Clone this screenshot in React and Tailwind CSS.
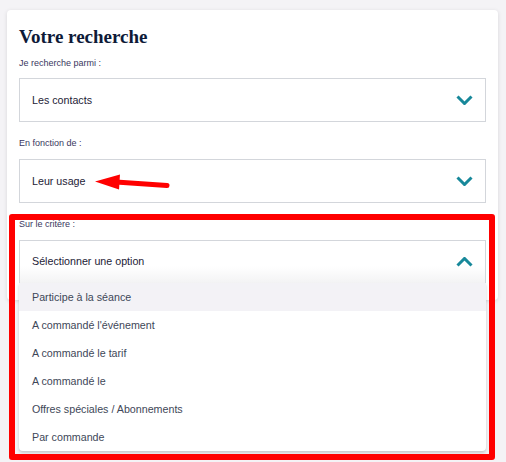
import React from "react";

const sans = { fontFamily: '"Liberation Sans", Arial, sans-serif' };

function Chevron({ up }) {
  return (
    <svg width="17" height="10" viewBox="0 0 17 10" className="shrink-0">
      <path
        d={up ? "M1.5 8.5 L8.5 1.5 L15.5 8.5" : "M1.5 1.5 L8.5 8.5 L15.5 1.5"}
        fill="none"
        stroke="#17889a"
        strokeWidth="3"
      />
    </svg>
  );
}

function Label({ children, className = "" }) {
  return (
    <div className={`text-[9px] leading-[12px] text-[#3a3760] ${className}`} style={sans}>
      {children}
    </div>
  );
}

function Select({ value, up }) {
  return (
    <div className="h-[44px] border border-[#d3d6db] bg-white flex items-center justify-between pl-[12px] pr-[12px]">
      <span className="text-[10.7px] text-[#1d2236]" style={sans}>
        {value}
      </span>
      <Chevron up={up} />
    </div>
  );
}

const options = [
  "Participe à la séance",
  "A commandé l'événement",
  "A commandé le tarif",
  "A commandé le",
  "Offres spéciales / Abonnements",
  "Par commande",
];

export default function App() {
  return (
    <div className="relative w-[506px] h-[462px] overflow-hidden bg-[#f4f3f6] pt-[10px] pl-[7px]">
      <div className="w-[491px] bg-white rounded-[4px] shadow-[0_1px_4px_rgba(0,0,0,0.12)] px-3 pt-[15px] pb-[16px]">
        <h1
          className="text-[19px] leading-[24px] font-bold text-[#0e1a38]"
          style={{ fontFamily: '"Liberation Serif", "Times New Roman", serif' }}
        >
          Votre recherche
        </h1>
        <Label className="mt-[8px] mb-[9px]">Je recherche parmi :</Label>
        <Select value="Les contacts" />
        <Label className="mt-[15px] mb-[10px]">En fonction de :</Label>
        <Select value="Leur usage" />
        <Label className="mt-[15px] mb-[10px]">Sur le critère :</Label>
        <div className="relative">
          <div className="h-[44px] border border-[#d3d6db] bg-gradient-to-b from-white from-60% to-[#f3f3f4] flex items-center justify-between pl-[12px] pr-[12px]">
            <span className="text-[10.7px] text-[#1d2236] -mt-[2px]" style={sans}>
              Sélectionner une option
            </span>
            <Chevron up />
          </div>
          <ul className="absolute left-0 right-0 top-[43px] z-10 bg-white rounded-b-[4px] shadow-[0_2px_3px_rgba(0,0,0,0.18)]">
            {options.map((o, i) => (
              <li
                key={o}
                className={`h-[28px] flex items-center pl-[13px] text-[10.7px] text-[#3e4758] ${
                  i === 0 ? "bg-[#f3f2f6]" : ""
                }`}
                style={sans}
              >
                {o}
              </li>
            ))}
          </ul>
        </div>
      </div>

      <div className="absolute left-[9px] top-[214px] w-[486px] h-[246px] border-[6px] border-[#ff0000] rounded-[3px] z-20 pointer-events-none" />

      <svg
        className="absolute left-0 top-0 z-20 pointer-events-none"
        width="506"
        height="462"
        viewBox="0 0 506 462"
      >
        <line x1="116" y1="182" x2="167" y2="185.5" stroke="#ff0000" strokeWidth="5" strokeLinecap="round" />
        <polygon points="95,181.5 120,174.5 119,189.5" fill="#ff0000" />
      </svg>
    </div>
  );
}
